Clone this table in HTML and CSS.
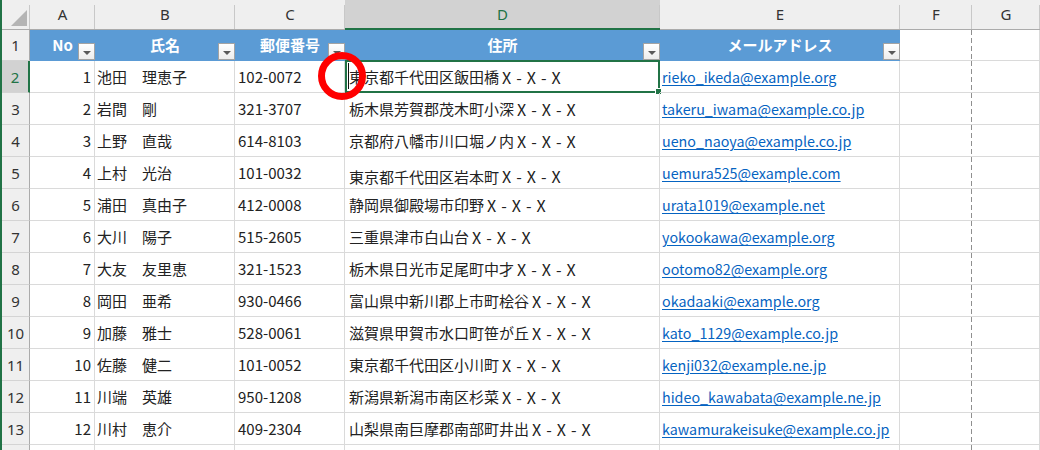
FILE: index.html
```html
<!DOCTYPE html>
<html lang="ja">
<head>
<meta charset="utf-8">
<title>Sheet</title>
<link rel="stylesheet" href="styles.css">
</head>
<body>
<div class="frame">
  <div class="sheet">
    <div class="ch corner"><span class="tri"></span></div>
    <div class="ch">A</div>
    <div class="ch">B</div>
    <div class="ch">C</div>
    <div class="ch ch-sel">D</div>
    <div class="ch">E</div>
    <div class="ch">F</div>
    <div class="ch">G</div>

    <div class="rh">1</div>
    <div class="th">No<span class="fb"></span></div>
    <div class="th">氏名<span class="fb"></span></div>
    <div class="th">郵便番号<span class="fb"></span></div>
    <div class="th">住所<span class="fb"></span></div>
    <div class="th">メールアドレス<span class="fb"></span></div>
    <div class="c brk"></div>
    <div class="c"></div>

    <div class="rh rh-sel">2</div>
    <div class="c num">1</div>
    <div class="c nm">池田　理恵子</div>
    <div class="c zip">102-0072</div>
    <div class="c addr sel">東京都千代田区飯田橋<span class="xx">X-X-X</span><span class="selbox"><span class="handle"></span></span><span class="caret"></span></div>
    <div class="c mail"><span class="link">rieko_ikeda@example.org</span></div>
    <div class="c brk"></div>
    <div class="c"></div>

    <div class="rh">3</div>
    <div class="c num">2</div>
    <div class="c nm">岩間　剛</div>
    <div class="c zip">321-3707</div>
    <div class="c addr">栃木県芳賀郡茂木町小深<span class="xx">X-X-X</span></div>
    <div class="c mail"><span class="link">takeru_iwama@example.co.jp</span></div>
    <div class="c brk"></div>
    <div class="c"></div>

    <div class="rh">4</div>
    <div class="c num">3</div>
    <div class="c nm">上野　直哉</div>
    <div class="c zip">614-8103</div>
    <div class="c addr">京都府八幡市川口堀ノ内<span class="xx">X-X-X</span></div>
    <div class="c mail"><span class="link">ueno_naoya@example.co.jp</span></div>
    <div class="c brk"></div>
    <div class="c"></div>

    <div class="rh">5</div>
    <div class="c num">4</div>
    <div class="c nm">上村　光治</div>
    <div class="c zip">101-0032</div>
    <div class="c addr low">東京都千代田区岩本町<span class="xx">X-X-X</span></div>
    <div class="c mail"><span class="link">uemura525@example.com</span></div>
    <div class="c brk"></div>
    <div class="c"></div>

    <div class="rh">6</div>
    <div class="c num">5</div>
    <div class="c nm">浦田　真由子</div>
    <div class="c zip">412-0008</div>
    <div class="c addr">静岡県御殿場市印野<span class="xx">X-X-X</span></div>
    <div class="c mail"><span class="link">urata1019@example.net</span></div>
    <div class="c brk"></div>
    <div class="c"></div>

    <div class="rh">7</div>
    <div class="c num">6</div>
    <div class="c nm">大川　陽子</div>
    <div class="c zip">515-2605</div>
    <div class="c addr">三重県津市白山台<span class="xx">X-X-X</span></div>
    <div class="c mail"><span class="link">yokookawa@example.org</span></div>
    <div class="c brk"></div>
    <div class="c"></div>

    <div class="rh">8</div>
    <div class="c num">7</div>
    <div class="c nm">大友　友里恵</div>
    <div class="c zip">321-1523</div>
    <div class="c addr">栃木県日光市足尾町中才<span class="xx">X-X-X</span></div>
    <div class="c mail"><span class="link">ootomo82@example.org</span></div>
    <div class="c brk"></div>
    <div class="c"></div>

    <div class="rh">9</div>
    <div class="c num">8</div>
    <div class="c nm">岡田　亜希</div>
    <div class="c zip">930-0466</div>
    <div class="c addr">富山県中新川郡上市町桧谷<span class="xx">X-X-X</span></div>
    <div class="c mail"><span class="link">okadaaki@example.org</span></div>
    <div class="c brk"></div>
    <div class="c"></div>

    <div class="rh">10</div>
    <div class="c num">9</div>
    <div class="c nm">加藤　雅士</div>
    <div class="c zip">528-0061</div>
    <div class="c addr">滋賀県甲賀市水口町笹が丘<span class="xx">X-X-X</span></div>
    <div class="c mail"><span class="link">kato_1129@example.co.jp</span></div>
    <div class="c brk"></div>
    <div class="c"></div>

    <div class="rh">11</div>
    <div class="c num">10</div>
    <div class="c nm">佐藤　健二</div>
    <div class="c zip">101-0052</div>
    <div class="c addr">東京都千代田区小川町<span class="xx">X-X-X</span></div>
    <div class="c mail"><span class="link">kenji032@example.ne.jp</span></div>
    <div class="c brk"></div>
    <div class="c"></div>

    <div class="rh">12</div>
    <div class="c num">11</div>
    <div class="c nm">川端　英雄</div>
    <div class="c zip">950-1208</div>
    <div class="c addr">新潟県新潟市南区杉菜<span class="xx">X-X-X</span></div>
    <div class="c mail"><span class="link">hideo_kawabata@example.ne.jp</span></div>
    <div class="c brk"></div>
    <div class="c"></div>

    <div class="rh">13</div>
    <div class="c num">12</div>
    <div class="c nm">川村　恵介</div>
    <div class="c zip">409-2304</div>
    <div class="c addr">山梨県南巨摩郡南部町井出<span class="xx">X-X-X</span></div>
    <div class="c mail"><span class="link">kawamurakeisuke@example.co.jp</span></div>
    <div class="c brk"></div>
    <div class="c"></div>

    <div class="rh"></div>
    <div class="c"></div>
    <div class="c"></div>
    <div class="c"></div>
    <div class="c"></div>
    <div class="c"></div>
    <div class="c brk"></div>
    <div class="c"></div>
  </div>
  <div class="mark"></div>
</div>
</body>
</html>
```

FILE: styles.css
```css
* {
  box-sizing: border-box;
  margin: 0;
  padding: 0;
}

html,
body {
  width: 1040px;
  height: 450px;
  overflow: hidden;
  background: #ffffff;
}

body {
  font-family: "Noto Sans CJK JP", "Noto Sans", sans-serif;
  font-size: 15px;
  color: #222222;
}

.frame {
  position: relative;
  height: 450px;
  overflow: hidden;
  border-left: 2px solid #217346;
}

.sheet {
  display: grid;
  grid-template-columns: 28px 65px 140px 110px 315px 240px 72px 68px;
  grid-template-rows: 30px 31px repeat(13, 32px);
}

/* column headers */
.ch {
  position: relative;
  display: flex;
  align-items: center;
  justify-content: center;
  background: #efefef;
  border-bottom: 1px solid #ababab;
  font-family: "Noto Sans", sans-serif;
  font-size: 15px;
  color: #333333;
  padding-bottom: 1px;
}

.ch::after {
  content: "";
  position: absolute;
  right: 0;
  top: 5px;
  bottom: 0;
  width: 1px;
  background: #c8c8c8;
}

.ch-sel {
  background: #d2d2d2;
  color: #217346;
  border-bottom: 2px solid #217346;
}

.corner .tri {
  position: absolute;
  right: 3px;
  bottom: 3px;
  width: 0;
  height: 0;
  border-left: 16px solid transparent;
  border-bottom: 16px solid #b4b4b4;
}

/* row headers */
.rh {
  display: flex;
  align-items: center;
  justify-content: center;
  background: #efefef;
  border-right: 1px solid #ababab;
  border-bottom: 1px solid #d4d4d4;
  font-family: "Noto Sans", sans-serif;
  font-size: 15px;
  color: #333333;
}

.rh-sel {
  background: #d2d2d2;
  color: #217346;
  border-right: 2px solid #217346;
}

/* table header row */
.th {
  position: relative;
  display: flex;
  align-items: center;
  justify-content: center;
  background: #5b9bd5;
  color: #ffffff;
  font-weight: bold;
  font-size: 15px;
  padding-bottom: 2px;
}

.fb {
  position: absolute;
  right: 0;
  bottom: 1px;
  width: 17px;
  height: 17px;
  border: 1px solid #a3a3a3;
  background: linear-gradient(#ffffff, #ededed);
  display: flex;
  align-items: center;
  justify-content: center;
}

.fb::before {
  content: "";
  width: 0;
  height: 0;
  margin-top: 2px;
  border-left: 4px solid transparent;
  border-right: 4px solid transparent;
  border-top: 4px solid #5a5a5a;
}

/* body cells */
.c {
  position: relative;
  display: flex;
  align-items: center;
  border-right: 1px solid #dadada;
  border-bottom: 1px solid #dadada;
  white-space: nowrap;
  color: #222222;
}

.num {
  justify-content: flex-end;
  padding-right: 3px;
}

.nm {
  padding-left: 2px;
}

.zip {
  padding-left: 3px;
}

.addr {
  padding-left: 4px;
}

.xx {
  font-size: 16px;
  letter-spacing: 5.5px;
  padding-left: 3px;
}

.low {
  padding-top: 7px;
}

.mail {
  padding-left: 2px;
}

.link {
  color: #0563c1;
  font-size: 14.3px;
  text-decoration: underline;
  text-underline-offset: 2px;
}

.brk {
  border-right: none;
  background: repeating-linear-gradient(to bottom, #8f8f8f 0 5px, transparent 5px 8px) right top / 1px 100% no-repeat;
}

/* active cell */
.selbox {
  position: absolute;
  left: 0;
  top: -1px;
  right: -1px;
  bottom: -1px;
  border: 2px solid #217346;
}

.handle {
  position: absolute;
  right: -4px;
  bottom: -4px;
  width: 7px;
  height: 7px;
  background: #217346;
  border: 1px solid #ffffff;
}

.caret {
  position: absolute;
  left: 3px;
  top: 2px;
  bottom: 3px;
  width: 1px;
  background: #111111;
}

/* annotation circle */
.mark {
  position: absolute;
  left: 316px;
  top: 52px;
  width: 48px;
  height: 48px;
  border: 7px solid #ff0000;
  border-radius: 50%;
}
```
